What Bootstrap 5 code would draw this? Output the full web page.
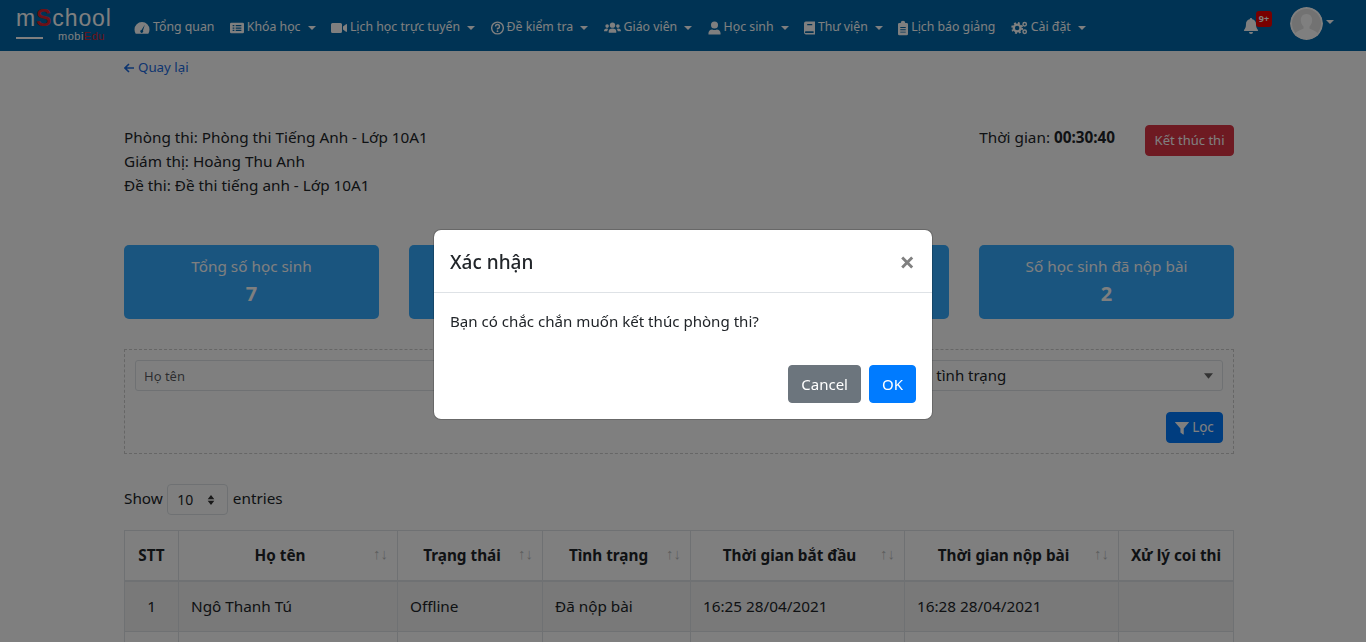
<!DOCTYPE html>
<html lang="vi">
<head>
  <meta charset="UTF-8">
  <meta name="viewport" content="width=device-width, initial-scale=1.0">
  <title>Phòng thi</title>
  <link rel="stylesheet" href="https://cdn.jsdelivr.net/npm/bootstrap@5.3.3/dist/css/bootstrap.min.css">
  <style>
    body { font-family: "Noto Sans", "Liberation Sans", sans-serif; font-size: 15.3px; color: #212529; overflow: hidden; background: #fff; }
    .top-bar { background: #0067a8; height: 51px; padding: 0 32px 0 16px; }
    .logo-box { width: 110px; color: #fff; line-height: 1; }
    .logo-main { font-family: "Liberation Sans", sans-serif; font-size: 23px; letter-spacing: .9px; display: block; margin-top: -3px; }
    .logo-main b { color: #d9232e; font-weight: 700; }
    .logo-sub { display: flex; align-items: center; gap: 15px; font-size: 11px; letter-spacing: .5px; font-family: "Liberation Sans", sans-serif; margin-top: 1px; }
    .logo-sub i { display: block; width: 27px; height: 2px; background: #fff; margin-top: 3px; }
    .logo-sub b { color: #d9232e; font-weight: 400; }
    .top-nav { padding-top: 4px; }
    .top-bar .nav-link { color: #fff; font-size: 12.3px; padding: 8px 7.4px 8px 8px; display: flex; align-items: center; gap: 3px; white-space: nowrap; }
    .top-bar .dropdown-toggle::after { margin-left: 4px; border-width: 4px 4px 0; }
    .nav-ico { width: 16px; height: 16px; fill: currentColor; flex: none; }
    .ico-10 { width: 10px; }
    .ico-11 { width: 11px; }
    .ico-13 { width: 13px; }
    .ico-14 { width: 14px; }
    .ico-17 { width: 17px; }
    .bell-wrap { position: relative; width: 30px; height: 24px; color: #fff; margin: 0 17px 5px 0; }
    .bell-wrap .nav-ico { position: absolute; left: 0; top: 7px; }
    .bell-badge { position: absolute; left: 13px; top: 0; width: 16px; height: 16px; background: #f00000; border-radius: 3px; color: #fff; font-size: 9px; font-weight: 700; line-height: 16px; text-align: center; }
    .avatar-pic { width: 33px; height: 33px; border-radius: 50%; display: block; margin-bottom: 4px; }
    .user-caret { border-top: 4px solid #fff; border-left: 4px solid transparent; border-right: 4px solid transparent; margin: 0 0 8px 3px; }
    .page-box { max-width: 1140px; padding: 0 19px 0 11px; }
    .back-link { display: flex; align-items: center; gap: 4px; font-size: 13.3px; color: #1a6ae0; text-decoration: none; margin-top: 7px; line-height: 19px; }
    .back-link svg { width: 10px; height: 10px; }
    .info-row { margin-top: 48px; }
    .info-text { line-height: 24px; }
    .end-btn { background: #dc3545; border-color: #dc3545; font-size: 13px; height: 31px; padding: 0 8.5px; line-height: 29px; color: #fff; margin-left: 30px; border-radius: 4px; }
    .stat-grid { display: grid; grid-template-columns: repeat(4, 1fr); gap: 30px; margin-top: 48px; }
    .stat-box { background: #34aaff; color: #fff; border-radius: 5px; height: 74px; text-align: center; padding-top: 10px; line-height: 22px; }
    .stat-box strong { display: block; font-size: 20px; line-height: 28px; margin-top: 3px; }
    .filter-box { border: 1px dashed #ccc; height: 105px; margin-top: 30px; padding: 10px; }
    .filter-cols { display: grid; grid-template-columns: repeat(3, 1fr); gap: 30px; }
    .filter-input { height: 31px; font-size: 13px; padding: 0 8px; border-radius: 3px; }
    .filter-select { height: 31px; font-size: 15px; padding: 0 14px; border-radius: 3px; background-image: url("data:image/svg+xml,%3csvg xmlns='http://www.w3.org/2000/svg' viewBox='0 0 10 6'%3e%3cpath fill='%23666' d='M0 0h10L5 6z'/%3e%3c/svg%3e"); background-size: 9px 6px; background-position: right 9px center; }
    .filter-btn { background: #007bff; border-color: #007bff; height: 31px; width: 57px; font-size: 13.5px; padding: 0; margin-top: 21px; display: flex; align-items: center; justify-content: center; gap: 3px; border-radius: 4px; }
    .entries-row { margin-top: 30px; height: 31px; gap: 4.5px; }
    .entries-row span { margin-bottom: 2px; }
    .entries-pick { width: 61px; height: 31px; font-size: 14px; padding: 0 9px; border-radius: 4px; background-size: 10px 10px; background-position: right 11px center; background-image: url("data:image/svg+xml,%3csvg xmlns='http://www.w3.org/2000/svg' viewBox='0 0 10 12'%3e%3cpath fill='%23333' d='M5 0l4 5H1zM5 12L1 7h8z'/%3e%3c/svg%3e"); }
    .exam-table { table-layout: fixed; width: 1110px; margin-top: 15px; border-color: #dee2e6; }
    .exam-table th { position: relative; text-align: center; height: 50px; vertical-align: middle; padding: 0 28px 0 12px; border-bottom: 2px solid #dee2e6; white-space: nowrap; }
    .exam-table th:first-child, .exam-table th:last-child { padding: 0 8px; }
    .exam-table td { height: 51px; vertical-align: middle; padding: 0 12px; }
    .exam-table td:first-child { text-align: center; }
    .exam-table th:nth-child(1) { width: 54px; }
    .exam-table th:nth-child(2) { width: 219px; }
    .exam-table th:nth-child(3) { width: 145px; }
    .exam-table th:nth-child(4) { width: 148px; }
    .exam-table th:nth-child(5), .exam-table th:nth-child(6) { width: 214px; }
    .sort-mark { position: absolute; right: 9px; top: 15px; font-size: 15px; font-weight: 400; line-height: 1; opacity: .3; letter-spacing: 0; }
    .confirm-dialog { margin-top: 229px; }
    .confirm-dialog .modal-header { height: 63px; padding: 0 16px; }
    .confirm-dialog .modal-title { font-size: 19px; font-weight: 500; padding-top: 3px; }
    .close-x { border: 0; background: none; color: #808080; font-size: 27px; font-weight: 700; line-height: 1; padding: 0 1px; margin-left: auto; }
    .confirm-dialog .modal-body { padding: 17px 16px 0; height: 72px; font-size: 15.1px; }
    .confirm-dialog .modal-footer { border: 0; padding: 0 16px 16px; gap: 8px; }
    .confirm-dialog .modal-footer .btn { margin: 0; height: 38px; font-size: 15px; padding: 0 12px; border-radius: 4px; }
    .ok-btn { background: #007bff; border-color: #007bff; }
  </style>
</head>
<body>
  <!-- Thanh menu -->
  <nav class="top-bar d-flex align-items-center">
    <a class="logo-box text-decoration-none" href="#">
      <span class="logo-main">m<b>S</b>chool</span>
      <span class="logo-sub"><i></i><span>mobi<b>Edu</b></span></span>
    </a>
    <ul class="nav top-nav flex-nowrap align-items-center">
      <li class="nav-item"><a class="nav-link" href="#"><svg class="nav-ico" viewBox="0 0 16 16"><path fill-rule="evenodd" d="M8 2a7.500 7.500 0 0 0-7.500 7.500c0 1.500.4 3 1.200 4.200h12.600c.8-1.200 1.200-2.700 1.200-4.200A7.500 7.500 0 0 0 8 2zm2.800 2.800L9 10.600a1.500 1.500 0 1 1-1.500-.7z"/></svg>Tổng quan</a></li>
      <li class="nav-item"><a class="nav-link dropdown-toggle" href="#"><svg class="nav-ico ico-14" viewBox="0 0 16 16"><path fill-rule="evenodd" d="M1.500 2h13A1.500 1.500 0 0 1 16 3.500v9a1.500 1.500 0 0 1-1.500 1.500h-13A1.500 1.500 0 0 1 0 12.500v-9A1.500 1.500 0 0 1 1.500 2zM3 4.500V6h2V4.500zm3.500 0V6H13V4.500zM3 7.300v1.500h2V7.300zm3.500 0v1.500H13V7.300zM3 10v1.500h2V10zm3.500 0v1.500H13V10z"/></svg>Khóa học</a></li>
      <li class="nav-item"><a class="nav-link dropdown-toggle" href="#"><svg class="nav-ico" viewBox="0 0 16 16"><path d="M1.500 3h8A1.500 1.500 0 0 1 11 4.500v7A1.500 1.500 0 0 1 9.500 13h-8A1.500 1.500 0 0 1 0 11.500v-7A1.500 1.500 0 0 1 1.500 3zM12 6.500l3-2.300c.4-.3 1-.1 1 .5v6.600c0 .6-.6.800-1 .5l-3-2.300z"/></svg>Lịch học trực tuyến</a></li>
      <li class="nav-item"><a class="nav-link dropdown-toggle" href="#"><svg class="nav-ico ico-13" viewBox="1 1 14 14"><circle cx="8" cy="8" r="6.300" fill="none" stroke="currentColor" stroke-width="1.500"/><path d="M5.900 6.400A2.100 2.100 0 1 1 8 8.500v1" fill="none" stroke="currentColor" stroke-width="1.500"/><circle cx="8" cy="11.400" r="1"/></svg>Đề kiểm tra</a></li>
      <li class="nav-item"><a class="nav-link dropdown-toggle" href="#"><svg class="nav-ico ico-17" viewBox="0 0 18 16"><circle cx="9" cy="5" r="2.800"/><circle cx="3.300" cy="6" r="1.900"/><circle cx="14.700" cy="6" r="1.900"/><path d="M5 13v-1.500C5 9.500 6.500 8.500 9 8.500s4 1 4 3V13zM0 11.500c0-2 1-3 3-3 .6 0 1.200.2 1.600.5-.8.700-1.100 1.600-1.100 2.500zM18 11.500c0-2-1-3-3-3-.6 0-1.200.2-1.600.5.800.700 1.100 1.600 1.100 2.500z"/></svg>Giáo viên</a></li>
      <li class="nav-item"><a class="nav-link dropdown-toggle" href="#"><svg class="nav-ico ico-13" viewBox="1 0 14 16"><circle cx="8" cy="4.800" r="3.800"/><path d="M1.500 15v-1.500C1.500 11 3.500 9.500 5.500 9.500c.8.400 1.600.6 2.500.6s1.700-.2 2.500-.6c2 0 4 1.500 4 4V15z"/></svg>Học sinh</a></li>
      <li class="nav-item"><a class="nav-link dropdown-toggle" href="#"><svg class="nav-ico ico-11" viewBox="2 1 12 14"><path fill-rule="evenodd" d="M4 1h10v14H4a2 2 0 0 1-2-2V3a2 2 0 0 1 2-2zm0 10.500a1 1 0 0 0 0 2h8.500v-2zM5.500 3.500V5H11V3.500z"/></svg>Thư viện</a></li>
      <li class="nav-item"><a class="nav-link" href="#"><svg class="nav-ico ico-10" viewBox="2.500 0 11 16"><path fill-rule="evenodd" d="M4 2.500h1.500a2.500 2.500 0 0 1 5 0H12A1.500 1.500 0 0 1 13.500 4v10.500A1.500 1.500 0 0 1 12 16H4a1.500 1.500 0 0 1-1.500-1.500V4A1.500 1.500 0 0 1 4 2.500zM5 7v1h6V7zm0 2.500v1h6v-1zM5 12v1h6v-1z"/></svg>Lịch báo giảng</a></li>
      <li class="nav-item"><a class="nav-link dropdown-toggle" href="#"><svg class="nav-ico ico-17" viewBox="0 0 18 16"><circle cx="6.500" cy="8" r="3.600" fill="none" stroke="currentColor" stroke-width="2.500"/><circle cx="6.500" cy="8" r="5.300" fill="none" stroke="currentColor" stroke-width="2" stroke-dasharray="2 2.200"/><circle cx="14.500" cy="4" r="1.800" fill="none" stroke="currentColor" stroke-width="1.500"/><circle cx="14.500" cy="12" r="1.800" fill="none" stroke="currentColor" stroke-width="1.500"/></svg>Cài đặt</a></li>
    </ul>
    <div class="ms-auto d-flex align-items-center">
      <div class="bell-wrap">
        <svg class="nav-ico" viewBox="0 0 16 16"><path d="M8 0a1.200 1.200 0 0 0-1.200 1.300C4.300 1.800 3 3.700 3 6c0 3.500-.9 4.700-2 6-.3.400 0 1 .5 1h13c.5 0 .8-.6.5-1-1.100-1.300-2-2.500-2-6 0-2.300-1.300-4.200-3.800-4.700A1.200 1.200 0 0 0 8 0zM6 14a2 2 0 0 0 4 0z"/></svg>
        <span class="bell-badge">9+</span>
      </div>
      <svg class="avatar-pic" viewBox="0 0 33 33"><circle cx="16.500" cy="16.500" r="16.500" fill="#fff"/><circle cx="16.500" cy="16.500" r="14.500" fill="#e4e4e4"/><path fill="#fff" d="M16.500 7c-3.800 0-5.700 2.800-5.700 6 0 2.800 1.200 5 2.700 6.400v2.400C9.500 23.300 6.500 24.500 5.500 26.500a14.500 14.500 0 0 0 22 0c-1-2-4-3.200-8-4.700v-2.400c1.500-1.400 2.700-3.600 2.700-6.400 0-3.200-1.900-6-5.700-6z"/></svg>
      <span class="user-caret"></span>
    </div>
  </nav>

  <div class="container page-box">
    <a class="back-link" href="#"><svg viewBox="0 0 10 10"><path d="M5 1L1 5l4 4M1 5h9" fill="none" stroke="currentColor" stroke-width="1.600"/></svg>Quay lại</a>

    <div class="info-row d-flex justify-content-between align-items-start">
      <div class="info-text">
        <div>Phòng thi: Phòng thi Tiếng Anh - Lớp 10A1</div>
        <div>Giám thị: Hoàng Thu Anh</div>
        <div>Đề thi: Đề thi tiếng anh - Lớp 10A1</div>
      </div>
      <div class="d-flex align-items-start">
        <span class="info-text">Thời gian: <b>00:30:40</b></span>
        <button class="btn btn-danger end-btn" type="button">Kết thúc thi</button>
      </div>
    </div>

    <div class="stat-grid">
      <div class="stat-box">Tổng số học sinh<strong>7</strong></div>
      <div class="stat-box"></div>
      <div class="stat-box"></div>
      <div class="stat-box">Số học sinh đã nộp bài<strong>2</strong></div>
    </div>

    <div class="filter-box">
      <div class="filter-cols">
        <input class="form-control filter-input" type="text" placeholder="Họ tên">
        <select class="form-select filter-select"><option>Chọn trạng thái</option></select>
        <select class="form-select filter-select"><option>Chọn tình trạng</option></select>
      </div>
      <div class="d-flex justify-content-end">
        <button class="btn btn-primary filter-btn" type="button"><svg class="nav-ico ico-14" viewBox="0 0 16 16"><path d="M.5 1h15c.4 0 .6.500.3.800L10 8.500V15c0 .4-.5.700-.8.400l-3-2.200V8.500L.2 1.800C-.1 1.500.1 1 .5 1z"/></svg>Lọc</button>
      </div>
    </div>

    <div class="entries-row d-flex align-items-center">
      <span>Show</span>
      <select class="form-select entries-pick"><option>10</option></select>
      <span>entries</span>
    </div>

    <table class="table table-bordered table-striped exam-table">
      <thead>
        <tr>
          <th>STT</th>
          <th>Họ tên<span class="sort-mark">↑↓</span></th>
          <th>Trạng thái<span class="sort-mark">↑↓</span></th>
          <th>Tình trạng<span class="sort-mark">↑↓</span></th>
          <th>Thời gian bắt đầu<span class="sort-mark">↑↓</span></th>
          <th>Thời gian nộp bài<span class="sort-mark">↑↓</span></th>
          <th>Xử lý coi thi</th>
        </tr>
      </thead>
      <tbody>
        <tr>
          <td>1</td>
          <td>Ngô Thanh Tú</td>
          <td>Offline</td>
          <td>Đã nộp bài</td>
          <td>16:25 28/04/2021</td>
          <td>16:28 28/04/2021</td>
          <td></td>
        </tr>
        <tr><td></td><td></td><td></td><td></td><td></td><td></td><td></td></tr>
      </tbody>
    </table>
  </div>

  <!-- Hộp thoại xác nhận -->
  <div class="modal-backdrop fade show"></div>
  <div class="modal fade show d-block" tabindex="-1">
    <div class="modal-dialog confirm-dialog">
      <div class="modal-content">
        <div class="modal-header">
          <h5 class="modal-title">Xác nhận</h5>
          <button type="button" class="close-x" aria-label="Close">×</button>
        </div>
        <div class="modal-body">Bạn có chắc chắn muốn kết thúc phòng thi?</div>
        <div class="modal-footer">
          <button type="button" class="btn btn-secondary">Cancel</button>
          <button type="button" class="btn btn-primary ok-btn">OK</button>
        </div>
      </div>
    </div>
  </div>

  <script src="https://cdn.jsdelivr.net/npm/bootstrap@5.3.3/dist/js/bootstrap.bundle.min.js"></script>
</body>
</html>
